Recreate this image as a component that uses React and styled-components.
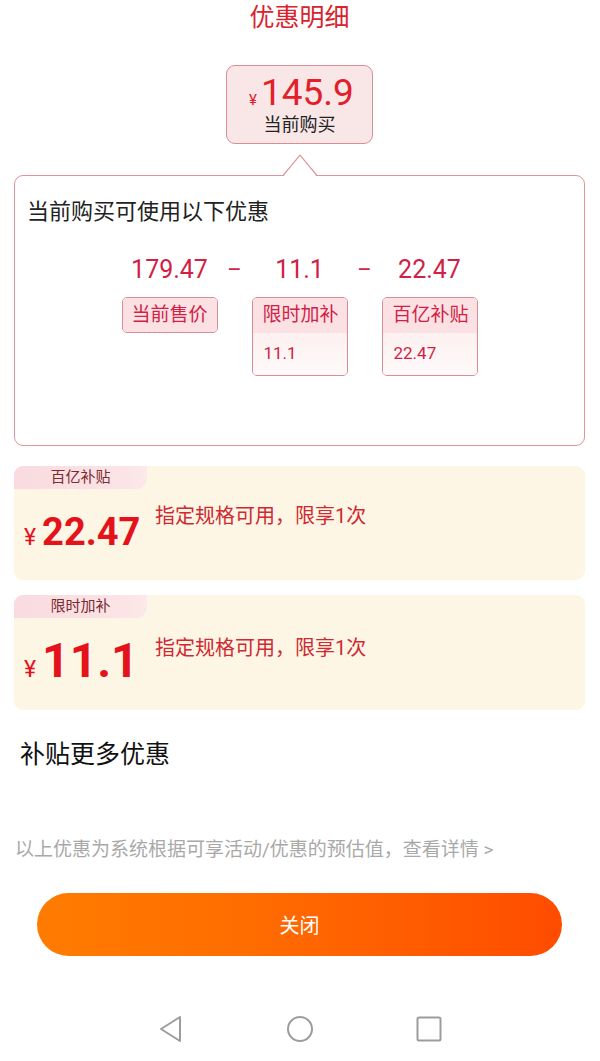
import React from 'react';
import styled, { createGlobalStyle } from 'styled-components';

const GlobalStyle = createGlobalStyle`
  html, body {
    margin: 0;
    padding: 0;
    background: #ffffff;
  }
  body {
    font-family: Roboto, "Noto Sans CJK SC", sans-serif;
  }
`;

const Page = styled.div`
  width: 600px;
  height: 1061px;
  display: flex;
  flex-direction: column;
  background: #ffffff;
  overflow: hidden;
`;

const Content = styled.div`
  flex: 1;
  display: flex;
  flex-direction: column;
  padding: 0 15px 0 14px;
`;

const Title = styled.div`
  height: 36px;
  line-height: 36px;
  text-align: center;
  font-size: 25px;
  color: #d9232e;
`;

const PriceBox = styled.div`
  align-self: center;
  width: 145px;
  margin-top: 29px;
  padding: 7px 0 6px;
  border: 1px solid #dc8d94;
  border-radius: 9px;
  background: #f9e6e7;
  text-align: center;
`;

const PriceLine = styled.div`
  line-height: 40px;
  color: #e2202b;
  font-size: 37px;
  margin-left: 4px;
`;

const Yen = styled.span`
  font-size: ${(p) => p.size || 15}px;
  font-weight: 400;
  line-height: 1;
  margin-right: ${(p) => p.gap || 4}px;
  color: ${(p) => p.color || 'inherit'};
`;

const PriceCaption = styled.div`
  font-size: 18px;
  line-height: 24px;
  color: #222;
`;

const DetailBox = styled.div`
  position: relative;
  margin-top: 31px;
  border: 1px solid #dd959b;
  border-radius: 9px;
  padding: 21px 0 0 12px;
  height: 248px;
`;

const Caret = styled.svg`
  position: absolute;
  top: -22px;
  left: 50%;
  margin-left: -17px;
`;

const DetailTitle = styled.div`
  font-size: 22px;
  line-height: 30px;
  color: #222;
`;

const Formula = styled.div`
  display: grid;
  grid-template-columns: 96px 34px 96px 34px 96px;
  grid-template-rows: 30px auto;
  row-gap: 12px;
  justify-content: center;
  margin: 28px 0 0 -12px;
`;

const Amount = styled.div`
  font-size: 25px;
  line-height: 30px;
  color: #d21f45;
  text-align: center;
  white-space: nowrap;
`;

const Minus = styled.div`
  font-size: 22px;
  line-height: 30px;
  color: #d21f45;
  text-align: center;
`;

const Label = styled.div`
  align-self: start;
  border: 1px solid #d98c93;
  border-radius: 5px;
  overflow: hidden;
`;

const LabelHead = styled.div`
  height: ${(p) => (p.alone ? 34 : 35)}px;
  line-height: 34px;
  padding-left: ${(p) => (p.alone ? 0 : 10)}px;
  text-align: ${(p) => (p.alone ? 'center' : 'left')};
  background: #fbe1e4;
  font-size: 19px;
  color: #d21f45;
`;

const LabelValue = styled.div`
  height: 42px;
  line-height: 40px;
  padding-left: 11px;
  background: linear-gradient(180deg, #fdf0f0 0%, #fefafa 100%);
  font-size: 17px;
  color: #d21f45;
`;

const Card = styled.div`
  margin-top: ${(p) => p.top}px;
  height: ${(p) => p.h}px;
  border-radius: 9px;
  background: #fdf6e5;
  display: flex;
  flex-direction: column;
  align-items: flex-start;
`;

const Tag = styled.div`
  width: 133px;
  height: 23px;
  line-height: 23px;
  text-align: center;
  font-size: 15px;
  color: #7a2c30;
  border-radius: 9px 0 10px 0;
  background: linear-gradient(90deg, #f9dbe0 0%, #fbe3e6 80%, #fce9e9 100%);
`;

const CardBody = styled.div`
  display: flex;
  align-items: flex-start;
  padding: ${(p) => p.pad}px 0 0 10px;
`;

const BigPrice = styled.div`
  width: 118px;
  margin-top: ${(p) => p.offset}px;
  font-size: ${(p) => p.size}px;
  line-height: ${(p) => p.lh}px;
  font-weight: 700;
  color: #e3121b;
  white-space: nowrap;
`;

const Rule = styled.div`
  margin-left: 13px;
  font-size: 20px;
  line-height: 28px;
  color: #cf2a33;
`;

const SectionTitle = styled.div`
  margin: 28px 0 0 6px;
  font-size: 25px;
  line-height: 34px;
  color: #111;
`;

const Note = styled.div`
  margin: 66px 0 0 1px;
  font-size: 19px;
  line-height: 24px;
  color: #a9a9a9;
  white-space: nowrap;
`;

const CloseButton = styled.button`
  align-self: center;
  margin-top: 31px;
  width: 525px;
  height: 63px;
  border: none;
  border-radius: 32px;
  background: linear-gradient(90deg, #ff7c00 0%, #ff6a00 45%, #ff4c00 100%);
  color: #ffffff;
  font-family: Roboto, "Noto Sans CJK SC", sans-serif;
  font-size: 20px;
  cursor: pointer;
`;

const NavBar = styled.div`
  height: 61px;
  display: flex;
  justify-content: center;
  align-items: center;
  gap: 102px;
  padding-bottom: 4px;
  box-sizing: border-box;
`;

const NavIcon = styled.svg`
  display: block;
`;

const subsidies = [
  { tag: '百亿补贴', price: '22.47', size: 38, lh: 44, pad: 13, offset: 8, top: 20, h: 114 },
  { tag: '限时加补', price: '11.1', size: 48, lh: 52, pad: 16, offset: 1, top: 15, h: 115 },
];

const App = () => {
  return (
    <Page>
      <GlobalStyle />
      <Content>
        <Title>优惠明细</Title>

        <PriceBox>
          <PriceLine>
            <Yen>¥</Yen>145.9
          </PriceLine>
          <PriceCaption>当前购买</PriceCaption>
        </PriceBox>

        <DetailBox>
          <Caret width="34" height="23" viewBox="0 0 34 23">
            <polygon points="0,23 17,1 34,23" fill="#ffffff" />
            <polyline points="0,21.5 17,1.2 34,21.5" fill="none" stroke="#dd959b" strokeWidth="1.2" />
          </Caret>
          <DetailTitle>当前购买可使用以下优惠</DetailTitle>
          <Formula>
            <Amount>179.47</Amount>
            <Minus>–</Minus>
            <Amount>11.1</Amount>
            <Minus>–</Minus>
            <Amount>22.47</Amount>

            <Label>
              <LabelHead alone>当前售价</LabelHead>
            </Label>
            <span />
            <Label>
              <LabelHead>限时加补</LabelHead>
              <LabelValue>11.1</LabelValue>
            </Label>
            <span />
            <Label>
              <LabelHead>百亿补贴</LabelHead>
              <LabelValue>22.47</LabelValue>
            </Label>
          </Formula>
        </DetailBox>

        {subsidies.map((s) => (
          <Card key={s.tag} top={s.top} h={s.h}>
            <Tag>{s.tag}</Tag>
            <CardBody pad={s.pad}>
              <BigPrice size={s.size} lh={s.lh} offset={s.offset}>
                <Yen size={23} gap={6} color="#e3121b">¥</Yen>
                {s.price}
              </BigPrice>
              <Rule>指定规格可用，限享1次</Rule>
            </CardBody>
          </Card>
        ))}

        <SectionTitle>补贴更多优惠</SectionTitle>

        <Note>以上优惠为系统根据可享活动/优惠的预估值，查看详情 &gt;</Note>

        <CloseButton>关闭</CloseButton>
      </Content>

      <NavBar>
        <NavIcon width="26" height="28" viewBox="0 0 26 28">
          <path d="M22 2 L3 14 L22 26 Z" fill="none" stroke="#9c9c9c" strokeWidth="2" strokeLinejoin="round" />
        </NavIcon>
        <NavIcon width="28" height="28" viewBox="0 0 28 28">
          <circle cx="14" cy="14" r="12" fill="none" stroke="#9c9c9c" strokeWidth="2" />
        </NavIcon>
        <NavIcon width="26" height="26" viewBox="0 0 26 26">
          <rect x="1.5" y="1.5" width="23" height="23" rx="1.5" fill="none" stroke="#9c9c9c" strokeWidth="2" />
        </NavIcon>
      </NavBar>
    </Page>
  );
};

export default App;
